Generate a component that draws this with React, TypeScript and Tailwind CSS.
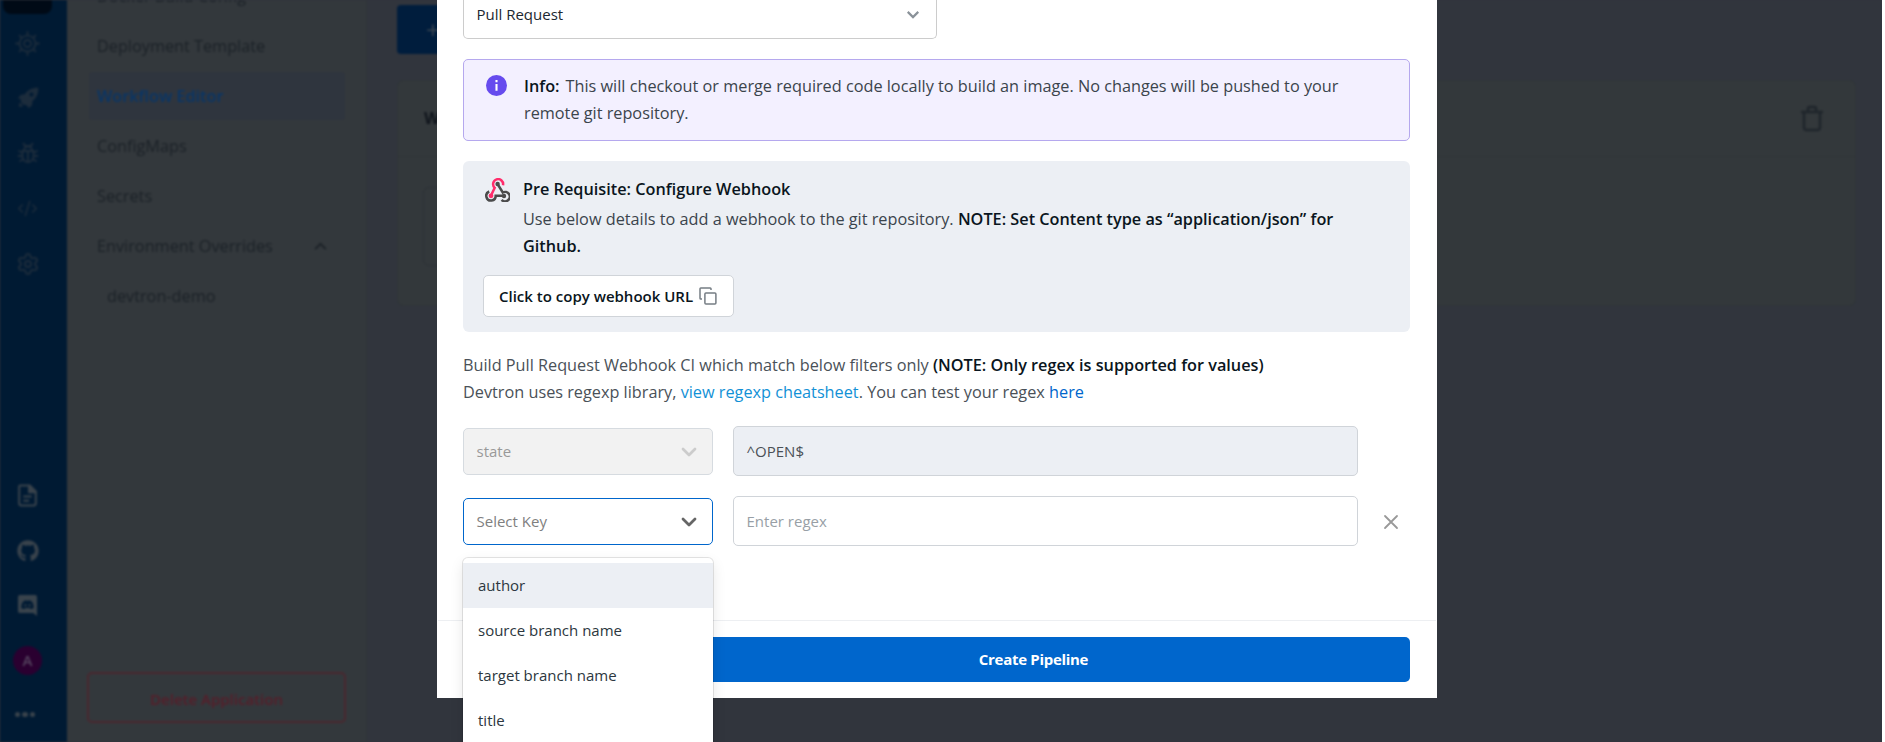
import type { ReactNode } from "react";
import { CodeXml, Settings } from "lucide-react";
import { FaGithub } from "react-icons/fa";

const navItems = ["Deployment Template", "Workflow Editor", "ConfigMaps", "Secrets"];
const options = ["author", "source branch name", "target branch name", "title"];

function Chevron({ className, width = 2 }: { className: string; width?: number }) {
  return (
    <svg viewBox="0 0 16 10" fill="none" stroke="currentColor" strokeWidth={width} className={className}>
      <path d="M2 2l6 6 6-6" strokeLinecap={width > 2.5 ? "round" : "butt"} strokeLinejoin={width > 2.5 ? "round" : "miter"} />
    </svg>
  );
}

function HelmIcon() {
  return (
    <svg viewBox="0 0 24 24" className="size-[25px]" fill="none" stroke="currentColor" strokeWidth="1.8" strokeLinecap="round">
      <circle cx="12" cy="12" r="7.6" />
      <circle cx="12" cy="12" r="3.4" />
      <path d="M12 4V1M12 23v-3M4 12H1M23 12h-3M6.3 6.3L4.4 4.4M19.6 19.6l-1.9-1.9M6.3 17.7l-1.9 1.9M19.6 4.4l-1.9 1.9" />
    </svg>
  );
}

function RocketIcon() {
  return (
    <svg viewBox="0 0 24 24" className="size-[24px]" fill="currentColor">
      <path
        fillRule="evenodd"
        d="M22.3 1.7C16 1.5 11.6 4 8.6 8.3L4.5 9 1.8 12.4l3 .7c-.5 1.6.1 3.2 1.2 4.5 1.300 1.200 2.900 1.700 4.500 1.400l2.200 3.300L16 19.200l.5-4.200c4-3.200 6-7.500 5.800-13.300zM15.500 10.600a2.100 2.100 0 1 1 0-4.200 2.100 2.100 0 0 1 0 4.200z"
      />
      <path d="M3.800 16.500c-1 1.200-.9 2.900-.8 4.200 1.500.1 3 .1 4.200-.8z" />
    </svg>
  );
}

function BugIcon() {
  return (
    <svg viewBox="0 0 24 24" className="size-[24px]" fill="none" stroke="currentColor" strokeWidth="1.9" strokeLinecap="round">
      <path d="M6.500 10h11v5.500a5.500 5.500 0 0 1-11 0zM12 11v9M8 9.500a4 4 0 0 1 8 0M9 5L7.500 2.500M15 5L16.500 2.500M9 5h6M6.500 12L3 10M6.500 15H2.500M7.500 18L4 20M17.500 12l3.500-2M17.500 15h4M16.500 18l3.500 2" />
    </svg>
  );
}

function DocIcon() {
  return (
    <svg viewBox="0 0 24 24" className="size-[25px]" fill="none" stroke="currentColor" strokeWidth="1.9" strokeLinejoin="round">
      <path d="M5 2.500h9.500l5.500 5.500v11.500a2 2 0 0 1-2 2H6a2 2 0 0 1-2-2v-16a1 1 0 0 1 1-1z" />
      <path d="M13.500 2.500v6.500H20z" fill="currentColor" />
      <path d="M8 13h8M8 17h5.500" />
    </svg>
  );
}

function DiscordIcon() {
  return (
    <svg viewBox="0 0 20 22" className="h-[21px] w-[19px]" fill="currentColor">
      <path
        fillRule="evenodd"
        d="M2 0h16a2 2 0 0 1 2 2v20l-4-3H2a2 2 0 0 1-2-2V2a2 2 0 0 1 2-2zM6 6.500c-1.500.8-2.700 4-2.500 7 1 .8 2.200 1.200 3.300 1.200l.8-1.200h4.800l.8 1.200c1.100 0 2.300-.4 3.300-1.200.2-3-1-6.200-2.500-7-1.300-.7-2.200-.9-3-.9l-.4.6H9.400L9 5.600c-.8 0-1.700.2-3 .9z"
      />
      <circle cx="7.800" cy="10.800" r="1.200" />
      <circle cx="12.200" cy="10.800" r="1.200" />
    </svg>
  );
}

function TrashIcon() {
  return (
    <svg viewBox="0 0 24 28" className="mb-[2px] h-[28px] w-[24px] text-[#1f252b]" fill="none" stroke="currentColor" strokeWidth="2.600">
      <path d="M1 8h22M4 8v15.500a2.500 2.500 0 0 0 2.500 2.500h11a2.500 2.500 0 0 0 2.500-2.500V8M8 7.500V4.500a1.500 1.500 0 0 1 1.500-1.500h5a1.500 1.500 0 0 1 1.500 1.500v3" />
    </svg>
  );
}

function WebhookIcon() {
  return (
    <svg viewBox="0 0 25 24" className="h-[24px] w-[25px] shrink-0" fill="none" strokeWidth="2.500">
      <path d="M4.200 13.500A4.700 4.700 0 1 0 10.700 17.800H18" stroke="#4b4b4b" />
      <path d="M12.600 6.200l5.200 8.300a4.700 4.700 0 1 1-1.200 7.300" stroke="#4b4b4b" />
      <path d="M18 7.200A5 5 0 1 0 9.700 9.800L6 17.500" stroke="#ff2d6b" />
      <circle cx="6" cy="17.800" r="2.400" fill="#ff2d6b" />
      <circle cx="12.600" cy="6" r="2.200" fill="#4b4b4b" />
      <circle cx="19" cy="18" r="2.200" fill="#4b4b4b" />
    </svg>
  );
}

function CopyIcon() {
  return (
    <svg viewBox="0 0 18 18" className="size-[18px] text-[#767d84]" fill="none" stroke="currentColor" strokeWidth="1.500">
      <rect x="5.900" y="5.900" width="11" height="11" rx="1" />
      <path d="M3 12H1.800a.8.8 0 0 1-.8-.8V1.800A.8.8 0 0 1 1.800 1h9.400a.8.8 0 0 1 .8.8V3" />
    </svg>
  );
}

function RailSlot({ children, className = "h-[55px]" }: { children: ReactNode; className?: string }) {
  return <div className={`flex w-[55px] items-center justify-center ${className}`}>{children}</div>;
}

function Backdrop() {
  return (
    <div className="flex h-[742px] w-[1882px] overflow-hidden blur-[0.9px]">
      <aside className="flex w-[67px] shrink-0 flex-col bg-[#001a33] text-[#1c2c3c]">
        <div className="ml-[3px] flex h-[14px] w-[49px] justify-center rounded-b-lg bg-[#000a16]" />
        <RailSlot className="mt-[2px] h-[55px]"><HelmIcon /></RailSlot>
        <RailSlot className="h-[54px]"><RocketIcon /></RailSlot>
        <RailSlot className="h-[56px]"><BugIcon /></RailSlot>
        <RailSlot><CodeXml className="size-[21px]" strokeWidth={1.700} /></RailSlot>
        <RailSlot><Settings className="size-[24px]" strokeWidth={2} /></RailSlot>
        <div className="mt-auto flex flex-col text-[#39434c]">
          <RailSlot><DocIcon /></RailSlot>
          <RailSlot><FaGithub className="size-[22px]" /></RailSlot>
          <RailSlot className="h-[54px]"><DiscordIcon /></RailSlot>
          <RailSlot className="h-[56px]">
            <span className="flex size-[29px] items-center justify-center rounded-full bg-[#2a0030] text-[15px] font-semibold text-[#55455f]">A</span>
          </RailSlot>
          <div className="flex h-[54px] w-[50px] items-center justify-center gap-[2px] pb-[1px]">
            <i className="size-[5.500px] rounded-full bg-current" />
            <i className="size-[5.500px] rounded-full bg-current" />
            <i className="size-[5.500px] rounded-full bg-current" />
          </div>
        </div>
      </aside>

      <nav className="flex w-[300px] shrink-0 flex-col border-r border-[#2f3439] bg-[#33383c] pr-[21px] pl-[22px] text-[16.250px] text-[#1b2127]">
        <div className="-mt-[28px] flex h-[49px] items-center pl-2">Docker Build Config</div>
        {navItems.map((item) =>
          item === "Workflow Editor" ? (
            <div key={item} className="my-[1px] flex h-[48px] items-center rounded bg-[#2f353e] pl-2 font-semibold text-[#083668]">{item}</div>
          ) : (
            <div key={item} className="flex h-[50px] items-center pl-2">{item}</div>
          ),
        )}
        <div className="flex h-[50px] items-center justify-between pr-[17px] pl-2">
          Environment Overrides
          <Chevron className="h-[9px] w-[15px] rotate-180" />
        </div>
        <div className="flex h-[50px] items-center pl-[18px]">devtron-demo</div>
        <div className="mt-auto mr-[-1px] mb-[19px] -ml-[2px] flex h-[51px] items-center justify-center rounded-[5px] border-2 border-[#4a272f] pt-[3px] text-[15px] font-semibold text-[#581d29]">
          Delete Application
        </div>
      </nav>

      <main className="flex flex-1 flex-col bg-[#31353d] pt-[5px] pr-[26px] pl-[30px]">
        <div className="flex h-[49px] w-[170px] items-center rounded bg-[#001d3d] pl-[29px] text-[24px] text-[#3a4652]">+</div>
        <section className="mt-[26px] flex h-[226px] flex-col rounded-md border border-[#2f3438] bg-[#33383b]">
          <header className="flex h-[76px] items-center justify-between border-b border-[#2f3438] pr-[31px] pl-[26px] text-[16.250px] font-bold text-[#10151c]">
            Workflow
            <TrashIcon />
          </header>
          <div className="mt-[30px] ml-[25px] h-[79px] w-[250px] rounded-md border border-[#2c3136]" />
        </section>
      </main>
    </div>
  );
}

function KeyMenu() {
  return (
    <div className="absolute top-[59px] -left-px z-10 h-[230px] w-[250px] rounded-t-[5px] bg-white pt-[5px] shadow-[0_0_0_1px_rgba(0,0,0,0.1),0_5px_14px_rgba(0,0,0,0.1)]">
      {options.map((option, index) => (
        <div key={option} className={`flex h-[45px] items-center pl-[15px] text-[15px] text-[#2c3740] ${index === 0 ? "bg-[#eceff4]" : ""}`}>
          {option}
        </div>
      ))}
    </div>
  );
}

function PipelineModal() {
  return (
    <div className="absolute top-0 left-[437px] flex h-[698px] w-[1000px] flex-col bg-white text-[16.250px] leading-[27px] text-[#3b444c]">
      <div className="flex flex-1 flex-col pr-[27px] pl-[26px]">
        <div className="flex h-[39px] w-[474px] items-center justify-between rounded-b-[5px] border border-t-0 border-[#cccccc] pr-[16px] pb-[9px] pl-[12.500px] text-[15px] text-[#1c2730]">
          Pull Request
          <Chevron className="h-[9px] w-[14px] text-[#8a9299]" width={2.500} />
        </div>

        <div className="mt-5 flex h-[82px] rounded-[5px] border border-[#b5a8ee] bg-[#f3f0ff] pt-[13px] pl-[22px]">
          <svg viewBox="0 0 22 22" className="mt-[2px] size-[21px] shrink-0">
            <circle cx="11" cy="11" r="11" fill="#664bee" />
            <path d="M11 9.500v7M11 5.300v2.400" stroke="#fff" strokeWidth="2.200" />
          </svg>
          <p className="ml-[17px] w-[850px]">
            <span className="mr-[6px] font-semibold text-[#0a1520]">Info:</span>
            This will checkout or merge required code locally to build an image. No changes will be pushed to your remote git repository.
          </p>
        </div>

        <div className="mt-5 flex h-[171px] flex-col rounded-md bg-[#eceff4] pt-[15px] pl-5">
          <div className="flex pl-[2px]">
            <div className="pt-[2px]"><WebhookIcon /></div>
            <div className="ml-[13px] w-[850px]">
              <div className="mb-[3px] font-semibold text-[#0a1520]">Pre Requisite: Configure Webhook</div>
              <p>
                Use below details to add a webhook to the git repository.{" "}
                <span className="font-semibold text-[#0a1520]">NOTE: Set Content type as “application/json” for Github.</span>
              </p>
            </div>
          </div>
          <button className="mt-[15px] flex h-[42px] w-[251px] items-center gap-[6px] rounded-[5px] border border-[#d0d4d9] bg-white pl-[15px] text-[15px] font-semibold whitespace-nowrap text-[#0a1520]">
            Click to copy webhook URL
            <CopyIcon />
          </button>
        </div>

        <div className="mt-5 text-[#4a5158]">
          <p>
            Build Pull Request Webhook CI which match below filters only{" "}
            <span className="font-semibold text-[#0a1520]">(NOTE: Only regex is supported for values)</span>
          </p>
          <p>
            Devtron uses regexp library, <a className="text-[#1291d6]">view regexp cheatsheet</a>. You can test your regex{" "}
            <a className="text-[#0066cc]">here</a>
          </p>
        </div>

        <div className="mt-5 flex items-center gap-5 text-[15px]">
          <div className="flex h-[47px] w-[250px] items-center justify-between rounded-[5px] border border-[#d6dbe0] bg-[#f2f2f2] pr-[15px] pl-[12.500px] text-[#999999]">
            state
            <Chevron className="mt-px h-[10px] w-[16px] text-[#cccccc]" width={2.800} />
          </div>
          <div className="flex h-[50px] w-[625px] items-center rounded-[5px] border border-[#d0d4d9] bg-[#eceff4] px-[12.500px] text-[#4a5056]">^OPEN$</div>
        </div>

        <div className="mt-5 flex items-center gap-5 text-[15px]">
          <div className="relative flex h-[47px] w-[250px] items-center justify-between rounded-[5px] border border-[#0066cc] bg-white pr-[15px] pl-[12.500px] text-[#808080]">
            Select Key
            <Chevron className="mt-px h-[10px] w-[16px] text-[#666666]" width={2.800} />
            <KeyMenu />
          </div>
          <div className="flex h-[50px] w-[625px] items-center rounded-[5px] border border-[#d0d4d9] px-[12.500px] text-[#989fa6]">Enter regex</div>
          <svg viewBox="0 0 16 16" className="mt-px ml-[4.500px] size-4" stroke="#999999" strokeWidth="1.800" strokeLinecap="round">
            <path d="M2 2l12 12M14 2L2 14" />
          </svg>
        </div>
      </div>

      <footer className="mx-px flex h-[78px] justify-end border-t border-[#edeff2] px-[26px] pt-4">
        <button className="h-[45px] w-[752px] rounded-[5px] bg-[#0066cc] pr-px text-[15px] font-bold tracking-[-0.3px] text-white">Create Pipeline</button>
      </footer>
    </div>
  );
}

export default function App() {
  return (
    <div className="relative h-[742px] w-full overflow-hidden bg-white font-['Open_Sans',sans-serif]">
      <div className="h-[742px] w-[1882px] overflow-hidden bg-[#31353d]">
        <Backdrop />
      </div>
      <PipelineModal />
    </div>
  );
}
